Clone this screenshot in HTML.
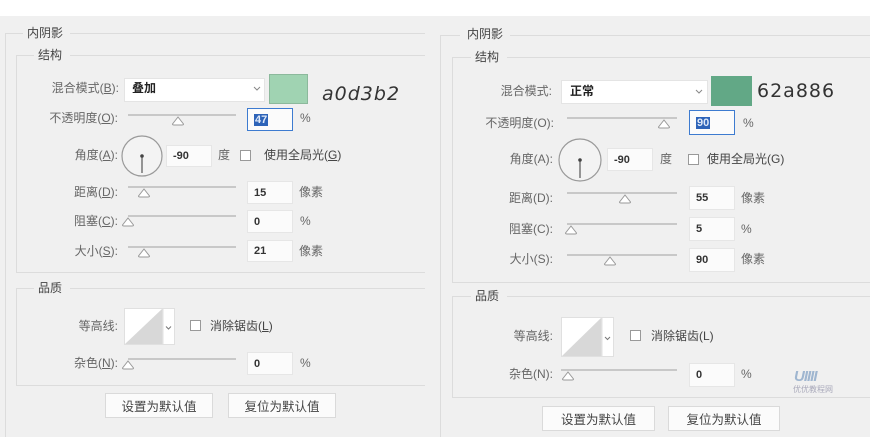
<!DOCTYPE html>
<html><head><meta charset="utf-8"><style>
*{margin:0;padding:0;box-sizing:border-box}
body{width:870px;height:437px;background:#f0f0f0;position:relative;overflow:hidden;font-family:"Liberation Sans","Noto Sans CJK SC",sans-serif;color:#666;font-size:12px}
.a{position:absolute}
.t{position:absolute;white-space:nowrap;line-height:14px;transform:translateY(-7px)}
.r{text-align:right}
.ln{position:absolute;background:#dcdcdc}
.inp{position:absolute;background:#fbfbfb;border:1px solid #e6e6e6;font-size:11px;color:#333;padding-left:6px;display:flex;align-items:center;font-weight:bold}
.btn{position:absolute;background:#fbfbfb;border:1px solid #dadada;display:flex;align-items:center;justify-content:center;color:#444;font-size:12.5px}
.cb{position:absolute;width:11px;height:11px;border:1px solid #999;background:#fff}
.hex{font-family:'DejaVu Sans',sans-serif;font-size:19px;color:#333;line-height:20px;transform:translateY(-10px);letter-spacing:1px}
</style></head><body>
<div class="a" style="left:0;top:0;width:870px;height:16px;background:#fff"></div>
<div id="root"></div>
<script>
const R=document.getElementById('root');
function add(h){R.insertAdjacentHTML('beforeend',h)}
function txt(x,y,s,extra='',cls=''){add(`<div class="t ${cls}" style="left:${x}px;top:${y}px;${extra}">${s}</div>`)}
function rtxt(xr,y,s){add(`<div class="t r" style="right:${870-xr}px;top:${y}px">${s}</div>`)}
function hl(x,y,w){add(`<div class="ln" style="left:${x}px;top:${y}px;width:${w}px;height:1px"></div>`)}
function vl(x,y,h){add(`<div class="ln" style="left:${x}px;top:${y}px;width:1px;height:${h}px"></div>`)}
function box(x,y,w,h,label,lx){hl(x,y,lx-x-4);hl(lx+label.length*13+6,y,x+w-(lx+label.length*13+6));vl(x,y,h);hl(x,y+h,w);txt(lx,y,label,'color:#444')}
function slider(x1,x2,y,th){add(`<div class="a" style="left:${x1}px;top:${y}px;width:${x2-x1}px;height:2px;background:#c8c8c8"></div>`);
 add(`<svg class="a" style="left:${th-7}px;top:${y+2}px" width="14" height="10"><path d="M7 1 L12.5 8 Q12.5 9 11 9 L3 9 Q1.5 9 1.5 8 Z" fill="#fff" stroke="#999" stroke-width="1"/></svg>`)}
function inp(x,y,w,h,v,sel){add(`<div class="inp" style="left:${x}px;top:${y}px;width:${w}px;height:${h}px;${sel?'border:1px solid #3d7bd0;':''}">${sel?`<span style="background:#2d63b8;color:#dfe9f8;padding:0 1px">${v}</span>`:v}</div>`)}
function dial(cx,cy,r){add(`<svg class="a" style="left:${cx-r-1}px;top:${cy-r-1}px" width="${2*r+2}" height="${2*r+2}"><circle cx="${r+1}" cy="${r+1}" r="${r}" fill="#f3f3f3" stroke="#999" stroke-width="1.2"/><line x1="${r+1}" y1="${r+1}" x2="${r+1}" y2="${2*r-2}" stroke="#555" stroke-width="1.2"/><circle cx="${r+1}" cy="${r+1}" r="1.8" fill="#444"/></svg>`)}
function contour(x,y,w,h){add(`<svg class="a" style="left:${x}px;top:${y}px" width="${w}" height="${h}"><rect x="0.5" y="0.5" width="${w-13}" height="${h-1}" fill="#fff" stroke="#e0e0e0"/><path d="M1 ${h-1} L${w-13} 1 L${w-13} ${h-1} Z" fill="#d8d8d8"/><rect x="${w-12}" y="0.5" width="11.5" height="${h-1}" fill="#fff" stroke="#e0e0e0"/><path d="M${w-9} ${h/2} l2.5 2.5 l2.5 -2.5" fill="none" stroke="#777"/></svg>`)}

/* LEFT */
hl(5,33,18);hl(70,33,355);vl(5,33,404);txt(27,33,'内阴影','color:#444');
box(16,55,409,217,'结构',38);
rtxt(119,88,'混合模式(<u>B</u>):');
add(`<div class="a" style="left:124px;top:78px;width:141px;height:24px;background:#fff;border:1px solid #e4e4e4"></div>`);
txt(132,88,'叠加','color:#222;font-weight:bold');
add(`<svg class="a" style="left:253px;top:86px" width="8" height="6"><path d="M1 1 l3 3 l3 -3" fill="none" stroke="#888"/></svg>`);
add(`<div class="a" style="left:269px;top:74px;width:39px;height:30px;background:#a0d3b2;border:1px solid #8cb99c"></div>`);
txt(322,94,'a0d3b2','font-style:italic','hex');
rtxt(118,118,'不透明度(<u>O</u>):');slider(128,236,114,178);inp(247,108,46,23,'47',1);txt(300,118,'%');
rtxt(118,155,'角度(<u>A</u>):');dial(142,156,20);inp(166,145,46,22,'-90');txt(218,155,'度');add(`<div class="cb" style="left:240px;top:150px"></div>`);txt(264,155,'使用全局光(<u>G</u>)','color:#444');
rtxt(118,192,'距离(<u>D</u>):');slider(128,236,186,144);inp(247,181,46,23,'15');txt(299,192,'像素');
rtxt(118,221,'阻塞(<u>C</u>):');slider(128,236,215,128);inp(247,210,46,23,'0');txt(300,221,'%');
rtxt(118,251,'大小(<u>S</u>):');slider(128,236,246,144);inp(247,240,46,22,'21');txt(299,251,'像素');
box(16,288,409,97,'品质',38);
rtxt(118,326,'等高线:');contour(124,308,51,37);add(`<div class="cb" style="left:190px;top:320px"></div>`);txt(210,326,'消除锯齿(<u>L</u>)','color:#444');
rtxt(118,363,'杂色(<u>N</u>):');slider(128,236,358,128);inp(247,352,46,23,'0');txt(300,363,'%');
add(`<div class="btn" style="left:105px;top:393px;width:108px;height:25px">设置为默认值</div>`);
add(`<div class="btn" style="left:228px;top:393px;width:108px;height:25px">复位为默认值</div>`);

/* RIGHT */
hl(440,35,20);hl(510,35,360);vl(440,35,402);txt(467,34,'内阴影','color:#444');
box(452,57,418,225,'结构',475);
rtxt(552,91,'混合模式:');
add(`<div class="a" style="left:561px;top:80px;width:147px;height:24px;background:#fff;border:1px solid #e4e4e4"></div>`);
txt(570,91,'正常','color:#222;font-weight:bold');
add(`<svg class="a" style="left:695px;top:89px" width="8" height="6"><path d="M1 1 l3 3 l3 -3" fill="none" stroke="#888"/></svg>`);
add(`<div class="a" style="left:711px;top:76px;width:41px;height:30px;background:#62a886"></div>`);
txt(757,91,'62a886','','hex');
rtxt(554,123,'不透明度(O):');slider(567,677,117,664);inp(689,110,46,25,'90',1);txt(743,123,'%');
rtxt(553,159,'角度(A):');dial(580,160,21);inp(607,148,46,23,'-90');txt(660,159,'度');add(`<div class="cb" style="left:688px;top:154px"></div>`);txt(707,159,'使用全局光(G)','color:#444');
rtxt(553,198,'距离(D):');slider(567,677,192,625);inp(689,186,46,24,'55');txt(741,198,'像素');
rtxt(553,229,'阻塞(C):');slider(567,677,223,571);inp(689,217,46,24,'5');txt(741,229,'%');
rtxt(553,259,'大小(S):');slider(567,677,254,610);inp(689,248,46,24,'90');txt(741,259,'像素');
box(452,296,418,101,'品质',475);
rtxt(553,336,'等高线:');contour(561,317,53,40);add(`<div class="cb" style="left:630px;top:330px"></div>`);txt(651,336,'消除锯齿(L)','color:#444');
rtxt(553,374,'杂色(N):');slider(561,677,369,568);inp(689,363,46,24,'0');txt(741,374,'%');
add(`<div class="btn" style="left:542px;top:406px;width:113px;height:25px">设置为默认值</div>`);
add(`<div class="btn" style="left:668px;top:406px;width:112px;height:25px">复位为默认值</div>`);
txt(794,376,'<b style="font-size:15px;color:#9fb6d0;font-style:italic;letter-spacing:-1px">UIIII</b>','line-height:16px');
txt(793,392,'优优教程网','font-size:8px;color:#aab;line-height:10px');
</script>
</body></html>
